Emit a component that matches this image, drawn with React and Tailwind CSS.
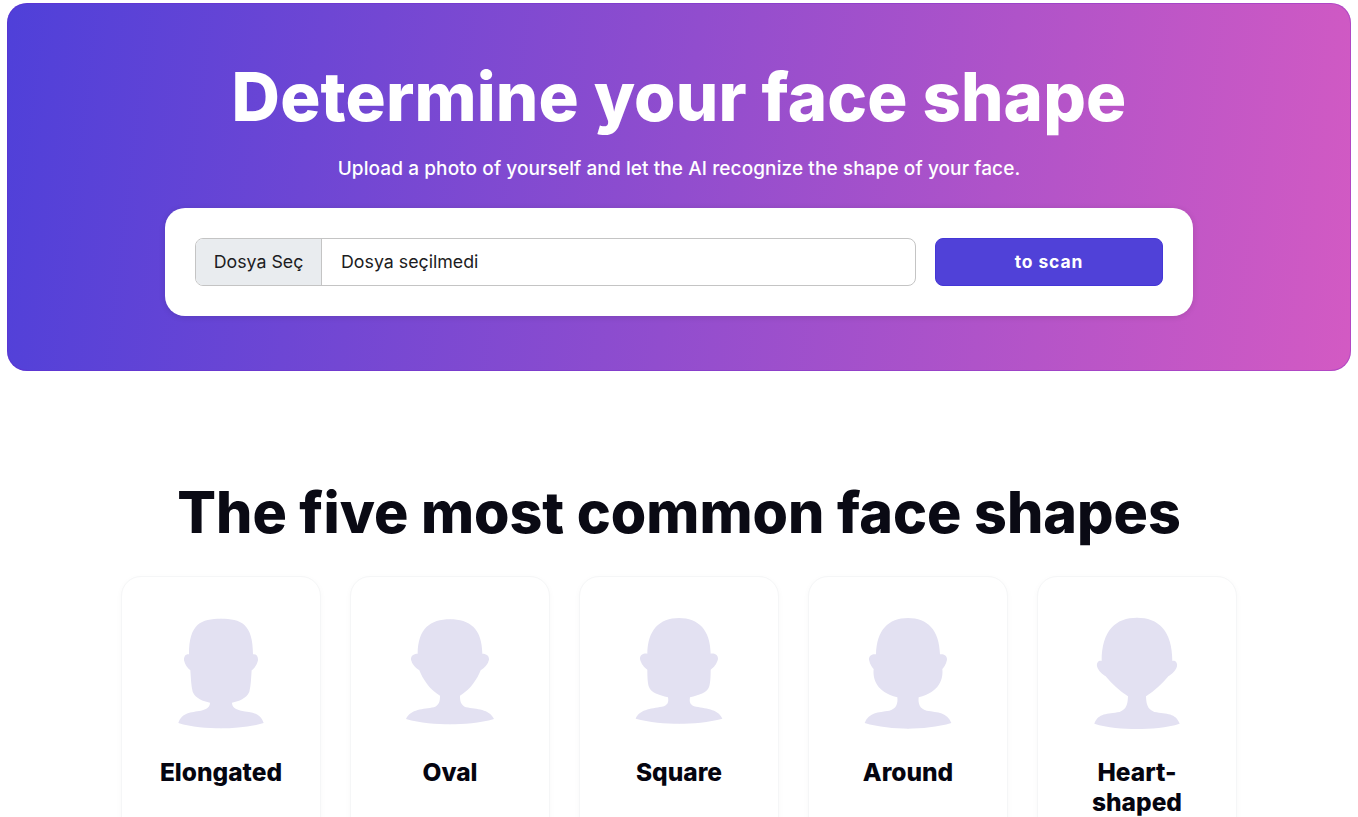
const FONT_HEAD = "font-['Inter','Liberation_Sans',sans-serif]";

// right half of each silhouette, x measured from the centre line
const FACES = [
  {
    name: 'Elongated',
    half: 'M-1 145 C60 145 96 160 96 252 C104 250 112 256 111 270 C108 284 100 294 92 300 C90 325 90 345 85 364 C76 385 54 392 33 397 C33 408 40 416 60 421 C90 426 118 426 128 458 C90 470 40 474 -1 474 Z',
  },
  {
    name: 'Oval',
    half: 'M-1 147 C60 147 96 175 97 250 C106 250 118 254 117 268 C114 282 104 292 92 300 C82 325 62 358 30 376 C30 392 32 404 48 411 C80 417 118 416 132 446 C90 458 40 462 -1 462 Z',
  },
  {
    name: 'Square',
    half: 'M-1 143 C60 143 94 180 95 250 C104 248 118 252 117 266 C114 280 104 292 95 298 C95 320 94 340 90 350 C84 368 60 374 33 381 C31 394 32 402 45 408 C78 416 116 414 130 445 C90 456 40 460 -1 460 Z',
  },
  {
    name: 'Around',
    half: 'M-1 143 C60 143 94 180 96 252 C104 250 118 254 117 268 C114 282 108 290 103 296 C106 325 96 365 32 381 C30 398 34 416 56 421 C90 426 118 426 130 458 C90 470 40 475 -1 475 Z',
  },
  {
    name: 'Heart-shaped',
    half: 'M-1 142 C64 142 106 180 106 272 C114 270 122 276 120 288 C116 302 104 312 94 318 C76 340 52 362 27 378 C28 395 28 416 52 425 C90 431 116 428 128 460 C90 472 40 476 -1 476 Z',
  },
];

function Silhouette({ half }) {
  return (
    <svg viewBox="-135 140 270 345" className="w-[90px] h-[115px] mx-auto">
      <path d={half} fill="#e3e1f2" />
      <path d={half} fill="#e3e1f2" transform="scale(-1 1)" />
    </svg>
  );
}

function FaceCard({ face }) {
  return (
    <div className="w-[200px] h-[300px] shrink-0 rounded-[20px] border border-[#f5f6f7] bg-white px-[20px] pt-[40px] text-center shadow-[0_2px_6px_rgba(0,0,0,0.03)]">
      <Silhouette half={face.half} />
      <h3 className={`${FONT_HEAD} mt-[25px] text-[24.5px] leading-[30px] font-extrabold text-[#050510]`}>{face.name}</h3>
    </div>
  );
}

export default function App() {
  return (
    <div className="h-[817px] overflow-hidden bg-white pt-[3px] px-[7px]">
      {/* hero */}
      <section className="h-[368px] rounded-[20px] bg-[linear-gradient(97deg,#4f40d9,#d35ac3)] pt-[54px] shadow-[inset_0_0_0_1px_rgba(110,30,200,0.3)]">
        <h1 className={`${FONT_HEAD} text-center text-[67px] leading-[80px] font-extrabold tracking-[0.002em] text-white`}>
          Determine your face shape
        </h1>
        <p className={`${FONT_HEAD} mt-[20px] text-center text-[19px] leading-[24px] font-medium tracking-[0.005em] text-white`}>
          Upload a photo of yourself and let the AI recognize the shape of your face.
        </p>
        <div className="mx-auto mt-[27px] flex h-[108px] w-[1028px] items-center gap-[19px] rounded-[20px] bg-white px-[30px] shadow-[0_1px_6px_rgba(0,0,0,0.12)]">
          <div className="flex h-[48px] flex-1 overflow-hidden rounded-[8px] border border-[#c4c4c4] font-['Inter',sans-serif] text-[17.8px] text-[#1c1c22]">
            <div className="flex w-[126px] items-center justify-center border-r border-[#c4c4c4] bg-[#e9ecef]">Dosya Seç</div>
            <div className="flex items-center pl-[19px]">Dosya seçilmedi</div>
          </div>
          <button className="h-[48px] w-[228px] rounded-[8px] border border-[#4436d6] bg-[#5041d8] font-['Inter',sans-serif] text-[17.5px] font-bold tracking-[0.05em] text-white">
            to scan
          </button>
        </div>
      </section>

      {/* common shapes */}
      <section className="pt-[105px]">
        <h2 className={`${FONT_HEAD} text-center text-[57.3px] leading-[72px] font-extrabold text-[#0a0a14]`}>
          The five most common face shapes
        </h2>
        <div className="mt-[28px] flex justify-center gap-[29px]">
          {FACES.map((face) => (
            <FaceCard key={face.name} face={face} />
          ))}
        </div>
      </section>
    </div>
  );
}
